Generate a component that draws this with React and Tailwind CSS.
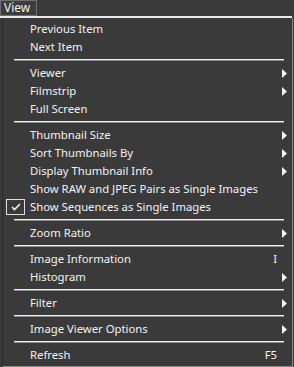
const items = [
  { label: "Previous Item" },
  { label: "Next Item" },
  { sep: true },
  { label: "Viewer", sub: true },
  { label: "Filmstrip", sub: true },
  { label: "Full Screen" },
  { sep: true },
  { label: "Thumbnail Size", sub: true },
  { label: "Sort Thumbnails By", sub: true },
  { label: "Display Thumbnail Info", sub: true },
  { label: "Show RAW and JPEG Pairs as Single Images" },
  { label: "Show Sequences as Single Images", checked: true },
  { sep: true },
  { label: "Zoom Ratio", sub: true },
  { sep: true },
  { label: "Image Information", shortcut: "I" },
  { label: "Histogram", sub: true },
  { sep: true },
  { label: "Filter", sub: true },
  { sep: true },
  { label: "Image Viewer Options", sub: true },
  { sep: true },
  { label: "Refresh", shortcut: "F5" },
]

const Arrow = () => (
  <svg width="5" height="9" viewBox="0 0 5 9" className="shrink-0">
    <path d="M0 0 L5 4.5 L0 9 Z" fill="#f2f2f2" />
  </svg>
)

const Check = () => (
  <div className="absolute left-[3px] top-[1px] w-[19px] h-[16px] border border-[#e0e0e0] bg-[#3a3a3a] flex items-center justify-center">
    <svg width="10" height="8" viewBox="0 0 10 8">
      <path d="M1 4 L3.5 6.5 L9 1" stroke="#f0f0f0" strokeWidth="1.6" fill="none" />
    </svg>
  </div>
)

export default function App() {
  return (
    <div
      className="w-[294px] h-[367px] bg-[#3a3a3a] text-[#f2f2f2] text-[11.3px] overflow-hidden flex flex-col"
      style={{ fontFamily: '"Noto Sans", "Open Sans", sans-serif' }}
    >
      {/* menu bar */}
      <div className="h-[16px] bg-[#3a3a3a] flex">
        <div className="w-[37px] h-[16px] border border-[#6e6e6e] bg-[#3c3c3c] flex items-center pl-[3px] leading-none text-[12px]">
          View
        </div>
      </div>
      <div className="h-[2px] bg-[#e8e8e8] mr-[2px]" />

      {/* dropdown */}
      <div className="flex-1 ml-[2px] mr-[1px] border-l border-[#2a2a2a] border-r border-r-[#8a8a8a] border-b border-b-[#8a8a8a] bg-[#3a3a3a] pt-[2px]">
        {items.map((it, i) =>
          it.sep ? (
            <div key={i} className="h-[8px] flex items-center pl-[11px] pr-[8px]">
              <div className="w-full h-[2px] border-t border-[#f0f0f0] border-b border-b-[#8a8a8a]" />
            </div>
          ) : (
            <div key={i} className="relative h-[18px] flex items-center pl-[27px] pr-[5px] leading-none">
              {it.checked && <Check />}
              <span className="flex-1 whitespace-nowrap">{it.label}</span>
              {it.sub && <Arrow />}
              {it.shortcut && <span className="mr-[10px]">{it.shortcut}</span>}
            </div>
          )
        )}
      </div>
    </div>
  )
}
